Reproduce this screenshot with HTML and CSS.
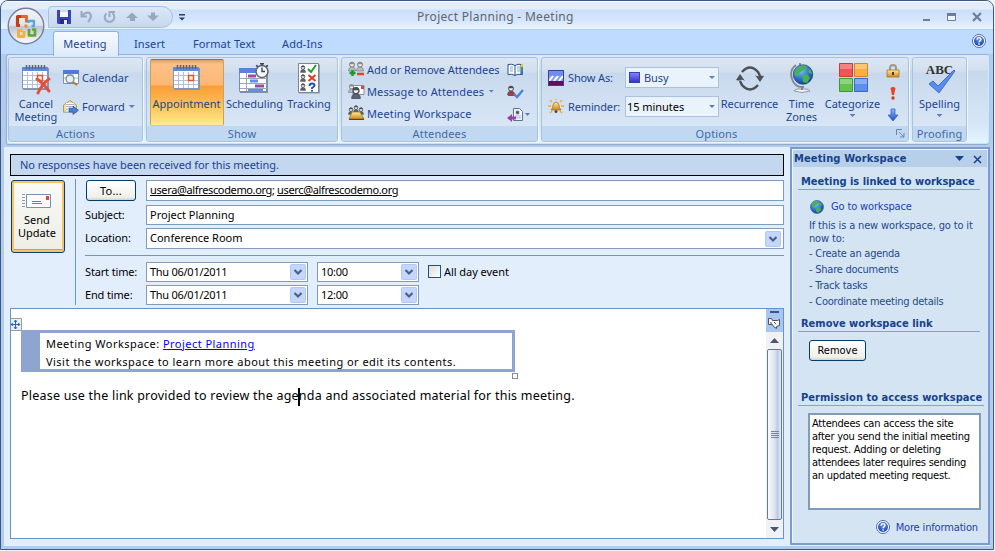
FILE: index.html
```
<!DOCTYPE html>
<html lang="en">
<head>
<meta charset="utf-8">
<title>Project Planning - Meeting</title>
<link rel="stylesheet" href="styles.css">
</head>
<body>
<svg class="defs" width="0" height="0">
  <defs>
    <linearGradient id="gBlue" x1="0" y1="0" x2="0" y2="1"><stop offset="0" stop-color="#8fb6ff"/><stop offset="1" stop-color="#1f4fc4"/></linearGradient>
    <linearGradient id="gGold" x1="0" y1="0" x2="0" y2="1"><stop offset="0" stop-color="#ffe9a0"/><stop offset="1" stop-color="#d08a14"/></linearGradient>
    <radialGradient id="gGlobe" cx=".4" cy=".3" r=".8"><stop offset="0" stop-color="#7cc4f4"/><stop offset=".6" stop-color="#2367c4"/><stop offset="1" stop-color="#123a80"/></radialGradient>
    <radialGradient id="gHelp" cx=".5" cy=".3" r=".7"><stop offset="0" stop-color="#6f9cf0"/><stop offset="1" stop-color="#123fae"/></radialGradient>
    <linearGradient id="gOrb" x1="0" y1="0" x2="0" y2="1"><stop offset="0" stop-color="#f4f6fa"/><stop offset=".48" stop-color="#dfe3ec"/><stop offset=".52" stop-color="#bcc4d3"/><stop offset="1" stop-color="#fdfdff"/></linearGradient>
    <symbol id="cal" viewBox="0 0 32 32">
      <path d="M3 5h26v22H3z" fill="#8b93a8"/><path d="M2.500 4.500h25v21h-25z" fill="#fff" stroke="#8496b8"/>
      <path d="M2 4h26v4H2z" fill="#5d8be0"/>
      <path d="M3 12.500h24M3 17.500h24M3 21.500h24M7.500 9v16M12.500 9v16M17.500 9v16M22.500 9v16" stroke="#b3c0da"/>
      <path d="M6.500 2v4M9.500 2v4M12.500 2v4M15.500 2v4M18.500 2v4M21.500 2v4M24.500 2v4" stroke="#5c6270" stroke-width="1.500"/>
      <path d="M17.500 12.500h5v5h-5z" fill="#fff3e8" stroke="#e8502c" stroke-width="1.400"/>
    </symbol>
    <symbol id="person" viewBox="0 0 8 9"><circle cx="4" cy="2.700" r="2.400" fill="#eee" stroke="#46494f"/><path d="M1.500 2.200a2.500 2.500 0 0 1 5 0z" fill="#4b4e55"/><path d="M.5 9q0-4 3.500-4t3.500 4z" fill="#5d636e" stroke="#3d4250" stroke-width=".5"/></symbol>
    <symbol id="pale" viewBox="0 0 8 9"><circle cx="4" cy="2.700" r="2.400" fill="#f1efe9" stroke="#777"/><path d="M1.500 2.200a2.500 2.500 0 0 1 5 0z" fill="#8d8a84"/><path d="M.5 9q0-4 3.500-4t3.500 4z" fill="#b9bec4" stroke="#6c727c" stroke-width=".6"/></symbol>
    <symbol id="help" viewBox="0 0 14 14"><circle cx="7" cy="7" r="6.500" fill="#fff" stroke="#4c6cae"/><circle cx="7" cy="7" r="5" fill="url(#gHelp)"/><path d="M5 5.600q.1-2 2-2t2 1.700q0 1-1 1.600t-1 1.300M7 9.200v1.500" fill="none" stroke="#fff" stroke-width="1.400"/></symbol>
    <symbol id="chev" viewBox="0 0 16 16"><rect x=".5" y=".5" width="15" height="15" rx="1" fill="#c5d6fc" stroke="#b3c7f4"/><path d="M4.500 6l3.500 3.500L11.500 6" fill="none" stroke="#4a6088" stroke-width="2.200"/></symbol>
  </defs>
</svg>

<div class="window">
  <header class="titlebar">
    <div class="qat">
      <svg width="14" height="14" viewBox="0 0 14 14"><path d="M0 0h14v14H1L0 13z" fill="#3a43b8"/><path d="M3 0h8v7H3z" fill="#f3f7ff"/><path d="M3 0h8v2H3z" fill="#c9dbf8"/><path d="M3 9h8v5H3z" fill="#25307a"/><path d="M7 10h3v4H7z" fill="#e6ebfa"/></svg>
      <svg width="14" height="14" viewBox="0 0 14 14"><path d="M1.500 1v5.500H7" fill="none" stroke="#9ba9c2" stroke-width="2"/><path d="M2 6q4-4.500 7.500-3 3.500 3.500-1.500 9" fill="none" stroke="#9ba9c2" stroke-width="2.200"/></svg>
      <svg width="14" height="14" viewBox="0 0 14 14"><path d="M3.500 3.500q-3 3-1 6.500 4 4 8 0 2-4-1-7M6.500 7V2H12" fill="none" stroke="#9ba9c2" stroke-width="2"/></svg>
      <svg width="12" height="14" viewBox="0 0 12 14"><path d="M0 8l6-5.500L12 8H9v3H4V8z" fill="#97a6c0"/></svg>
      <svg width="12" height="14" viewBox="0 0 12 14"><path d="M0 5.500h4v-3h4v3h4L6 11z" fill="#97a6c0"/></svg>
    </div>
    <svg class="qat-more" width="6" height="8" viewBox="0 0 6 8"><path d="M0 0h6v1.500H0zM0 3.500h6l-3 3z" fill="#213f7a"/></svg>
    <h1>Project Planning - Meeting</h1>
    <svg class="winbtns" width="62" height="14" viewBox="0 0 62 14"><path d="M1 9h7v2H1z" fill="#6d7d99"/><path d="M25.500 4.500h8v6h-8z" fill="#eef4ff" stroke="#6d7d99"/><path d="M25 3h9v3h-9z" fill="#6d7d99"/><path d="M51 3l8 8M59 3l-8 8" stroke="#6d7d99" stroke-width="2.200"/></svg>
  </header>
  <svg class="orb" width="38" height="38" viewBox="0 0 38 38">
    <circle cx="19" cy="19" r="17.800" fill="url(#gOrb)" stroke="#75809a" stroke-width="1.400"/>
    <g fill="none" stroke-linejoin="round">
      <path d="M19 10v-.5h-8.500V18.500H13" stroke="#c93a12" stroke-width="3.200"/><path d="M14 9.500h5.500v6" stroke="#e4622b" stroke-width="2.800"/>
      <path d="M21.500 16v-2h5.500v5h-2.500" stroke="#5aa3dc" stroke-width="2.300"/>
      <path d="M17 24v5.500h-5.500v-6h4" stroke="#f3b429" stroke-width="2.900"/>
      <path d="M22 22v6.500h6v-6h-3" stroke="#5fa730" stroke-width="2.700"/>
    </g><path d="M17.500 17.500h3v3h-3z" fill="#ee8a2c"/>
  </svg>

  <nav class="tabs">
    <span class="tab active">Meeting</span><span class="tab t2">Insert</span><span class="tab t3">Format Text</span><span class="tab t4">Add-Ins</span>
    <svg class="tabhelp" width="14" height="14"><use href="#help"/></svg>
  </nav>

  <section class="ribbon">
    <div class="group actions">
      <div class="gbody">
        <div class="big w48"><svg width="32" height="32" viewBox="0 0 32 32"><use href="#cal"/><path d="M17 16q6 4 12 12M29 16q-7 5-11 14" fill="none" stroke="#e4513a" stroke-width="3" stroke-linecap="round"/></svg><span>Cancel<br>Meeting</span></div>
        <div class="list two">
          <div class="cmd"><svg width="16" height="16" viewBox="0 0 16 16"><path d="M.5.500h15v13H.5z" fill="#fff" stroke="#7990ba"/><path d="M0 0h16v4H0z" fill="#4d7bd8"/><path d="M1 8h14M5 4v9M10 4v9" stroke="#a7b6d2"/><circle cx="7" cy="9" r="4" fill="#e6edf5" stroke="#7b8798" stroke-width="1.300"/><path d="M10 12l4 3" stroke="#bd7721" stroke-width="2"/></svg><span>Calendar</span></div>
          <div class="cmd"><svg width="16" height="16" viewBox="0 0 16 16"><path d="M.5 6L7 1.500 13.500 6v7H.5z" fill="#f8dc94" stroke="#b39a62"/><path d="M3 4h8v5H3z" fill="#fff"/><path d="M3 5.500h8M3 7.500h8" stroke="#9db4dd"/><path d="M.5 13L7 8l6.500 5z" fill="#eef2f8" stroke="#9aa8be" stroke-width=".7"/><path d="M6 9.500h4V7l5.500 4.300-5.500 4.200V13H6z" fill="#4a7fe2" stroke="#1b4096" stroke-width=".6"/></svg><span>Forward</span><i class="dd"></i></div>
        </div>
      </div>
      <div class="gname">Actions</div>
    </div>

    <div class="group show">
      <div class="gbody">
        <div class="big sel"><svg width="32" height="32"><use href="#cal"/></svg><span>Appointment</span></div>
        <div class="big w62"><svg width="32" height="32" viewBox="0 0 32 32"><path d="M1 7h28v23H1z" fill="#8390a8"/><path d="M.5 5.500h27v23H.5z" fill="#fff" stroke="#7d8da9"/><path d="M0 5h28v5H0z" fill="#5583de"/><path d="M1 15.500h27M1 20.500h27M1 25.500h27M7.500 10v18" stroke="#98a5bd"/><path d="M9 11.500h8v3H9zM16 21.500h9v3h-9z" fill="#984b9f"/><path d="M11 16.500h8v3h-8zM9 26h15v2H9z" fill="#5a90ef"/><circle cx="23" cy="8.500" r="6" fill="#f6f8fb" stroke="#626a78" stroke-width="1.600"/><path d="M21 .7h4M23 .7v2M23 4.500v4h3M17 2.500l2 1M29 2.500l-2 1" fill="none" stroke="#3d4350" stroke-width="1.400"/></svg><span>Scheduling</span></div>
        <div class="big w48t"><svg width="26" height="32" viewBox="0 0 26 32"><path d="M3 1.500h21v29H3z" fill="#9aa2b0"/><path d="M2.500.500h20v29h-20z" fill="#fff" stroke="#77849c"/><use href="#person" x="4" y="2" width="6" height="8"/><use href="#person" x="4" y="11" width="6" height="8"/><use href="#person" x="4" y="20" width="6" height="8"/><path d="M12 6l3 3 5-7" fill="none" stroke="#219b30" stroke-width="2"/><path d="M12.500 12l7 6M19.500 12l-7 6" stroke="#e23a20" stroke-width="2"/><path d="M13.500 23q0-2.500 2.500-2.500t2.500 2q0 1-2.500 2.500v1M16 27v1.500" fill="none" stroke="#1c51ad" stroke-width="2"/></svg><span>Tracking</span></div>
      </div>
      <div class="gname">Show</div>
    </div>

    <div class="group attendees">
      <div class="gbody">
        <div class="list three">
          <div class="cmd addrem"><svg width="17" height="16" viewBox="0 0 17 16"><use href="#pale" x="0" y="0" width="8" height="11"/><use href="#pale" x="8" y="0" width="8" height="11"/><path d="M4.500 9v6M1.500 12h6" stroke="#1b9b29" stroke-width="2.500"/><path d="M9 13h7" stroke="#e34427" stroke-width="2.500"/></svg><span>Add or Remove Attendees</span></div>
          <div class="cmd"><svg width="17" height="16" viewBox="0 0 17 16"><path d="M5 2.500h11v9H5z" fill="#fff" stroke="#8190ab"/><path d="M13 3h3v3h-3z" fill="#d94a2d"/><use href="#pale" x="0" y="1" width="7" height="9"/><use href="#person" x="3" y="4" width="10" height="12"/></svg><span>Message to Attendees</span><i class="dd"></i></div>
          <div class="cmd"><svg width="17" height="16" viewBox="0 0 17 16"><use href="#person" x="0" y="2" width="6" height="8"/><use href="#person" x="5" y="0" width="6" height="8"/><use href="#person" x="10" y="2" width="6" height="8"/><path d="M4 7h8l4 7H1z" fill="url(#gGold)" stroke="#9b6c13" stroke-width=".7"/><path d="M1 14.500h15" stroke="#554323"/></svg><span>Meeting Workspace</span></div>
        </div>
        <div class="minis">
          <svg width="24" height="14" viewBox="0 0 24 14"><path d="M1 1.500q4-1 7 1 3-2 6-1v10q-3-1-6 1-3-2-7-1z" fill="#fff" stroke="#284f91"/><path d="M8 2.500v10" stroke="#284f91"/><path d="M3 4h3M3 6h3M3 8h3M10 4h3M10 6h3M10 8h3" stroke="#81a5da"/><path d="M15 1v3" stroke="#e9c337" stroke-width="2"/><path d="M15 4v4" stroke="#37a047" stroke-width="2"/><path d="M15 8v4" stroke="#3b69c2" stroke-width="2"/></svg>
          <svg width="24" height="14" viewBox="0 0 24 14"><use href="#person" x="0" y="0" width="8" height="11"/><path d="M2 7h5l2 4H1z" fill="#a23b45"/><path d="M7 9l3 3 6-7" fill="none" stroke="#4b82db" stroke-width="2.400"/></svg>
          <svg width="24" height="16" viewBox="0 0 24 16"><path d="M6.500 1.500h6l3 3v9h-9z" fill="#f5f9ff" stroke="#61718e"/><path d="M9 4h3v3H9zM8 9h6M8 11h6" fill="#445" stroke="#8b98ae" stroke-width=".7"/><path d="M0 11l5-4v2.500h4v3H5V15z" fill="#9a45a3"/><path d="M18 6h5l-2.500 3z" fill="#5580b8"/></svg>
        </div>
      </div>
      <div class="gname">Attendees</div>
    </div>

    <div class="group options">
      <div class="gbody">
        <div class="optgrid">
          <svg width="16" height="16" viewBox="0 0 16 16"><path d="M0 0h16v6H0z" fill="#6f8ff0"/><path d="M0 6h16v5H0z" fill="#8aa4e6"/><path d="M1 11l4-5M6 11l4-5M11 11l4-5" stroke="#fff" stroke-width="2"/><path d="M0 11h16v5H0z" fill="#6b0a63"/><path d="M.5.500h15v15H.5z" fill="none" stroke="#3e3c94"/></svg>
          <span>Show As:</span><div class="combo busy"><b></b><em>Busy</em><i class="dd"></i></div>
          <svg width="16" height="16" viewBox="0 0 16 16"><path d="M2 1l2 2M14 1l-2 2M0 7h3M13 7h3M2 14l2-2M14 14l-2-2M8 0v1" stroke="#f1a638" stroke-width="1.300"/><path d="M3 11q2-2 2-5 1-3 3-3t3 3q0 3 2 5z" fill="url(#gGold)" stroke="#a46a14" stroke-width=".7"/><circle cx="8" cy="12.500" r="1.500" fill="#6a481c"/></svg>
          <span>Reminder:</span><div class="combo"><em class="dark">15 minutes</em><i class="dd"></i></div>
        </div>
        <div class="big rec"><svg width="32" height="32" viewBox="0 0 32 32"><path d="M8 9Q16 0 24 9l2 4M24 22Q16 31 8 22l-2-4" fill="none" stroke="#4d5057" stroke-width="2.500"/><path d="M2 17l4-6 5 7q-3-2-4-1t-5 0zM30 13l-4 6-5-7q3 2 4 1t5 0z" fill="#4d5057"/></svg><span>Recurrence</span></div>
        <div class="big tz"><svg width="28" height="32" viewBox="0 0 28 32"><path d="M9 26q-3 1-3 2 8 3 16 0-1-2-5-2z" fill="#f1f3f5" stroke="#8d939d"/><path d="M12 0v3M8 2Q1 7 4 16t12 8M14 23v4" fill="none" stroke="#81878f" stroke-width="1.800"/><circle cx="15" cy="11.500" r="9.800" fill="url(#gGlobe)" stroke="#1f4a79" stroke-width=".7"/><path d="M9 5l6-3 4 2-3 3-5 3-2 4-3-3zM14 12l5-1 3 4-3 5-4-1zM20 6l3 1 1 4-3-1z" fill="#48b153"/></svg><span>Time<br>Zones</span></div>
        <div class="big cat"><svg width="32" height="32" viewBox="0 0 32 32"><path d="M2.500.500h13v13h-13z" fill="#f05454" stroke="#cf3835"/><path d="M17.500.500h13v13h-13z" fill="#f8b041" stroke="#d58724"/><path d="M2.500 15.500h13v13h-13z" fill="#62c34f" stroke="#3c9a31"/><path d="M17.500 15.500h13v13h-13z" fill="#5b8eef" stroke="#3b65c8"/><path d="M3 1h12v5H3zM18 1h12v5H18zM3 16h12v5H3zM18 16h12v5H18z" fill="#fff" opacity=".28"/></svg><span>Categorize</span><i class="dd"></i></div>
        <div class="flags">
          <svg width="14" height="14" viewBox="0 0 14 14"><path d="M4 7V4q0-3 3-3t3 3v3" fill="none" stroke="#9a988c" stroke-width="2"/><path d="M1 6h12v7H1z" fill="url(#gGold)" stroke="#a77719" stroke-width=".8"/><path d="M7 8v3" stroke="#4c3a17" stroke-width="2"/></svg>
          <svg width="14" height="14" viewBox="0 0 14 14"><path d="M4.500 2q2.500-2 5 0L8 9H6z" fill="#e8441d"/><circle cx="7" cy="12" r="1.700" fill="#d63818"/></svg>
          <svg width="14" height="14" viewBox="0 0 14 14"><path d="M5 1h4v6h3l-5 6-5-6h3z" fill="url(#gBlue)" stroke="#2656c0" stroke-width=".7"/></svg>
        </div>
      </div>
      <div class="gname optname">Options<svg class="launch" width="9" height="9" viewBox="0 0 9 9"><path d="M.5 6V.500H6M3 3l5 5M8 4v4H4" fill="none" stroke="#6785ad"/></svg></div>
    </div>

    <div class="group proofing">
      <div class="gbody">
        <div class="big spell"><div class="abc">ABC<svg width="28" height="24" viewBox="0 0 28 24"><path d="M1 14l4-3 5 5L26 0l1 1-16 22z" fill="#5b8dee" stroke="#2c5cc0" stroke-width=".8"/></svg></div><span>Spelling</span><i class="dd"></i></div>
      </div>
      <div class="gname">Proofing</div>
    </div>
  </section>

  <main class="content">
    <div class="form">
      <div class="infobar">No responses have been received for this meeting.</div>
      <div class="head">
        <button class="send"><svg width="30" height="16" viewBox="0 0 30 16"><path d="M0 1.500h3M0 4.500h3M0 7.500h3M0 10.500h3M0 13.500h3" stroke="#8b98ad"/><path d="M4.500 1.500h24v13h-24z" fill="#fbfcfd" stroke="#7690b7"/><path d="M24 3h3v4h-3z" fill="#d94b2c"/><path d="M10 8.500h9M10 10.500h10" stroke="#6381b6"/></svg><span>Send<br>Update</span></button>
        <div class="fields">
          <div class="row r1"><button class="xpbtn tobtn">To...</button><div class="input to"><u>usera@alfrescodemo.org</u>; <u>userc@alfrescodemo.org</u></div></div>
          <div class="row r2"><label>Subject:</label><div class="input">Project Planning</div></div>
          <div class="row r3"><label>Location:</label><div class="input">Conference Room<svg width="16" height="16"><use href="#chev"/></svg></div></div>
          <div class="row r4"><label>Start time:</label><div class="input date">Thu 06/01/2011<svg width="16" height="16"><use href="#chev"/></svg></div><div class="input time">10:00<svg width="16" height="16"><use href="#chev"/></svg></div><i class="check"></i><span class="allday">All day event</span></div>
          <div class="row r5"><label>End time:</label><div class="input date">Thu 06/01/2011<svg width="16" height="16"><use href="#chev"/></svg></div><div class="input time">12:00<svg width="16" height="16"><use href="#chev"/></svg></div></div>
        </div>
      </div>
      <div class="editor">
        <div class="page">
          <svg class="mover" width="11" height="13" viewBox="0 0 11 13"><path d="M0 .500h10.500v12H0" fill="#e8eefa" stroke="#9c9c9c"/><path d="M4.500 2v9M0 6.500h9" stroke="#2f62c4"/><path d="M3 3.500L4.500 2 6 3.500zM3 9.500L4.500 11 6 9.500zM1.500 5L0 6.500 1.500 8zM7.500 5L9 6.500 7.500 8z" fill="#2f62c4" stroke="#2f62c4" stroke-width=".6"/></svg>
          <div class="card"><p class="l1">Meeting Workspace: <u>Project Planning</u></p><p class="l2">Visit the workspace to learn more about this meeting or edit its contents.</p><i class="handle"></i></div>
          <p class="bodytext">Please use the link provided to review the age<i class="caret"></i>nda and associated material for this meeting.</p>
        </div>
        <div class="scroll">
          <svg width="17" height="23" viewBox="0 0 17 23"><path d="M0 0h17v23H0z" fill="#a9c6f0"/><path d="M4 2h9v2H4z" fill="#3f5680"/><path d="M2.500 9.500h3l1 2h5l2-1v6l-3 1v2l-3-2-1-2h-4z" fill="#f4f4f0" stroke="#4b5466"/><path d="M8 13l2 2M4 14h2" stroke="#4b5466"/></svg>
          <svg class="arr" width="17" height="18" viewBox="0 0 17 18"><path d="M4 11l4.500-5 4.500 5z" fill="#4a5573"/></svg>
          <div class="thumb"><i></i><i></i><i></i><i></i></div>
          <svg class="arr" width="17" height="18" viewBox="0 0 17 18"><path d="M4 7l4.500 5L13 7z" fill="#4a5573"/></svg>
        </div>
      </div>
    </div>

    <aside class="pane">
      <div class="panehead"><strong>Meeting Workspace</strong><svg width="28" height="10" viewBox="0 0 28 10"><path d="M0 2h9L4.500 7z" fill="#15428b"/><path d="M19 2l7 7M26 2l-7 7" stroke="#15428b" stroke-width="1.500"/></svg></div>
      <h2 class="h-link">Meeting is linked to workspace</h2>
      <div class="goto"><svg width="14" height="14" viewBox="0 0 14 14"><circle cx="7" cy="7" r="6.500" fill="url(#gGlobe)" stroke="#476c96" stroke-width=".8"/><path d="M2 3l4-2 2 2-3 3-3 1zM6 8l4-1 1 3-3 3-2-2zM9 2l3 2-1 2-2-1z" fill="#48b053"/></svg><a>Go to workspace</a></div>
      <p class="intro">If this is a new workspace, go to it<br>now to:</p>
      <ul><li>- Create an agenda</li><li>- Share documents</li><li>- Track tasks</li><li>- Coordinate meeting details</li></ul>
      <h2 class="h-rem">Remove workspace link</h2>
      <button class="xpbtn remove">Remove</button>
      <h2 class="h-perm">Permission to access workspace</h2>
      <div class="note">Attendees can access the site<br>after you send the initial meeting<br>request. Adding or deleting<br>attendees later requires sending<br>an updated meeting request.</div>
      <div class="more"><svg width="14" height="14"><use href="#help"/></svg><a>More information</a></div>
    </aside>
  </main>
</div>
</body>
</html>
```
FILE: styles.css
```
* { box-sizing: border-box; }
html, body { height: 551px; overflow: hidden; }
body { margin: 0; background: #f2f5fa; font-family: "Noto Sans", "Open Sans", sans-serif; font-size: 11px; color: #1c4590; }
p, h1, h2, ul { margin: 0; padding: 0; list-style: none; font-weight: normal; }
i, em { font-style: normal; }
svg { display: block; flex: none; }
span, a, label, p, strong { white-space: nowrap; }
.defs { position: absolute; }
.window { position: relative; width: 994px; height: 550px; border: 1px solid #3b5a82; border-radius: 8px 8px 0 0; background: #b4cbed; overflow: hidden; }

.titlebar { display: flex; height: 29px; border-top: 1px solid #fff; border-bottom: 1px solid #b0cfef; background: linear-gradient(#e4edfb 0 7px, #ccdff9 8px, #d5e6fb 18px, #eaf3ff 27px, #e8f3ff); }
.qat { display: flex; gap: 9px; align-items: center; width: 125px; height: 22px; margin: 4px 0 0 47px; padding-left: 8px; border: 1px solid #a8bfde; border-radius: 4px 11px 11px 0; background: linear-gradient(#dce7f7, #c7d8ef); }
.qat-more { margin: 12px 0 0 6px; }
h1 { margin: 6px 0 0 232px; font-size: 12px; line-height: 17px; letter-spacing: .3px; color: #62656f; white-space: nowrap; }
.winbtns { margin: 8px 9px 0 auto; }
.orb { position: absolute; left: 6px; top: 6px; }

.tabs { display: flex; height: 24px; background: #bfdbff; letter-spacing: .1px; line-height: 27px; }
.tab.active { width: 66px; height: 25px; margin: 1px 0 0 52px; padding-right: 2px; line-height: 24px; text-align: center; border: 1px solid #8db2e3; border-bottom: 0; border-radius: 3px 3px 0 0; background: linear-gradient(#f5faff, #dfeafa); z-index: 1; }
.t2 { margin-left: 15px; width: 59px; }
.t3 { width: 89px; }
.tabhelp { margin: 4px 7px 0 auto; }

.ribbon { display: flex; gap: 3px; width: 983px; height: 90px; margin-left: 5px; padding: 2px 1px; border: 1px solid #8db2e3; border-right-color: #b7f0ff; border-bottom-color: #b4ecf8; border-radius: 3px; background: linear-gradient(#dfe8f5 0, #d2dfef 15px, #c8d9ed 16px, #d7e7f7 70px, #e4f4ff); box-shadow: 0 1px 1px #8ba9d0; }
.group { height: 85px; border: 1px solid #a6c3e1; border-radius: 3px; background: linear-gradient(#dde7f3 0, #d2deed 14px, #c9d9ed 15px, #d8e6f6 69px); box-shadow: 1px 1px #eff7ff; overflow: hidden; }
.actions { width: 135px; }
.show { width: 192px; }
.attendees { width: 197px; }
.options { width: 368px; }
.proofing { width: 55px; }
.gbody { display: flex; height: 68px; }
.gname { height: 15px; line-height: 15px; text-align: center; background: #c2d8f0; color: #3e6aaa; letter-spacing: .15px; }
.optname { position: relative; padding-right: 17px; }
.launch { position: absolute; right: 3px; top: 3px; }
.dd { flex: none; width: 6px; height: 3px; background: #5580b8; clip-path: polygon(0 0, 100% 0, 50% 100%); }
.big { display: flex; flex-direction: column; align-items: center; padding-top: 5px; line-height: 13px; text-align: center; letter-spacing: 0; }
.big > svg { margin-bottom: 2px; }
.big .dd { margin-top: 4px; }
.w48 { width: 54px; }
.sel { width: 74px; height: 67px; margin: 1px 0 0 3px; padding: 3px 1px 0 0; border: 1px solid #8b7552; border-color: #8b7552 #c9a25b #ffc93c; border-radius: 2px; background: linear-gradient(#d9a06a 0, #fbc088 4px, #fdb873 25px, #fb9e38 26px, #fdb952 42px, #ffe583 62px, #fff0a0); }
.w62 { width: 61px; }
.w48t { width: 48px; }
.list { display: flex; flex-direction: column; }
.cmd { display: flex; align-items: center; letter-spacing: .13px; }
.addrem { letter-spacing: -.08px; }
.cmd span { margin-left: 2px; }
.two .cmd span { margin-left: 3px; letter-spacing: 0; }
.cmd .dd { margin-left: 4px; }
.two .cmd { height: 29px; }
.two { padding-top: 5px; }
.three { width: 159px; padding: 0 0 0 6px; }
.three .cmd { height: 22px; }
.minis { display: flex; flex-direction: column; gap: 8px; padding: 5px 0 0 6px; }
.optgrid { display: grid; grid-template-columns: 16px 53px 94px; grid-template-rows: 21px 21px; row-gap: 8px; column-gap: 4px; align-items: center; padding: 9px 0 0 6px; width: 177px; height: 60px; letter-spacing: -.15px; }
.combo { display: flex; align-items: center; height: 21px; padding: 0 3px 0 1px; border: 1px solid #abc1de; background: #eaf2fb; letter-spacing: -.05px; }
.combo b { width: 11px; height: 11px; margin: 0 4px 0 2px; background: linear-gradient(#8080ff, #3434cf); border: 1px solid #3d3da8; }
.combo .dd { margin-left: auto; }
.dark { color: #000; }
.rec { width: 61px; letter-spacing: -.12px; }
.tz { width: 43px; }
.cat { width: 59px; }
.flags { display: flex; flex-direction: column; gap: 8px; padding: 6px 0 0 4px; }
.spell { width: 100%; }
.abc { position: relative; height: 34px; font: bold 13px/13px "Liberation Serif", serif; color: #333; letter-spacing: 0; }
.abc svg { position: absolute; left: 2px; top: 7px; }

.content { display: flex; height: 399px; margin: 3px 3px 0 3px; background: #e3eefd; }
.form { display: flex; flex: none; flex-direction: column; width: 786px; padding: 7px 0 0 6px; color: #000; letter-spacing: 0; }
.infobar { width: 774px; height: 22px; padding-left: 9px; border: 1px solid #000; line-height: 19px; background: #c3d8ef; color: #1f4190; letter-spacing: -.06px; }
.head { display: flex; height: 126px; margin-top: 3px; width: 774px; }
.send { display: flex; flex: none; flex-direction: column; align-items: center; width: 54px; height: 73px; margin: 1px 0 0 1px; padding: 12px 2px 0 0; border: 1px solid #0f3c6b; border-radius: 3px; background: linear-gradient(#fafaf7, #eeeee6); box-shadow: inset 0 0 0 2px #f6c463, inset 0 -3px #e79c22; font: 11px/13px "Noto Sans", sans-serif; letter-spacing: 0; }
.send svg { margin: 0 0 4px; }
.fields { flex: none; width: 709px; margin-left: 10px; padding: 1px 0 0 9px; border-left: 1px solid #6a97d4; }
.row { display: flex; height: 20px; line-height: 20px; }
.r1 { height: 21px; }
.r2 { margin-top: 4px; }
.r3 { height: 21px; margin-top: 3px; }
.r4 { margin-top: 6px; padding-top: 6px; height: 27px; border-top: 1px solid #6a97d4; }
.r5 { margin-top: 3px; }
.row label { width: 61px; letter-spacing: -.15px; }
.input { display: flex; flex: 1; align-items: center; height: 100%; padding: 0 2px 1px 3px; border: 1px solid #7f9db9; background: #fff; white-space: pre; }
.input svg { margin: 1px 0 0 auto; }
.input.to { letter-spacing: -.36px; }
.date { flex: none; width: 162px; padding-right: 1px; letter-spacing: -.27px; }
.time { flex: none; width: 102px; margin-left: 9px; padding-right: 1px; letter-spacing: -.27px; }
.check { width: 13px; height: 13px; margin: 3px 3px 0 9px; border: 1px solid #1c5180; background: linear-gradient(135deg, #dcdcd7, #fff); }
.allday { letter-spacing: -.05px; }
.xpbtn { padding: 0; border: 1px solid #003c74; border-radius: 3px; background: linear-gradient(#fff, #f0f0ea 85%, #d8d0c4); font: 11px/18px "Noto Sans", sans-serif; letter-spacing: .2px; }
.tobtn { width: 50px; margin: 0 10px 0 1px; }

.editor { display: flex; width: 774px; height: 231px; margin-top: 3px; border: 1px solid #6593cf; background: #fff; }
.page { flex: 1; }
.mover { margin-top: 9px; }
.card { position: relative; width: 494px; height: 42px; margin: -1px 0 0 10px; padding-left: 6px; border: 3px solid #8ea5d2; border-left-width: 19px; line-height: 18px; letter-spacing: .46px; }
.card p { height: 18px; padding-top: 2px; }
.card u { color: #00f; }
.handle { position: absolute; right: -6px; bottom: -10px; width: 6px; height: 6px; border: 1px solid #8b8b8b; background: #fff; }
.bodytext { margin: 15px 0 0 10px; font-size: 12.5px; line-height: 17px; letter-spacing: .22px; }
.caret { display: inline-block; width: 2px; height: 18px; margin: -4px -1px -4px -1px; vertical-align: middle; background: #000; }
.scroll { display: flex; flex-direction: column; width: 17px; background: #f0f1f4; }
.thumb { display: flex; flex: 1; flex-direction: column; gap: 1px; align-items: center; justify-content: center; width: 15px; margin: -1px 0 0 1px; border: 1px solid #6b7894; border-radius: 2px; background: linear-gradient(90deg, #fafafc, #dce4f0 50%, #b9cbe7 75%, #e8eef8); }
.thumb i { width: 8px; height: 1px; background: #7c879c; }

.pane { flex: none; width: 200px; height: 398px; border: 2px solid #7a9cce; background: #d5e4f3; padding: 1px; font-family: "DejaVu Sans Condensed", "Noto Sans", sans-serif; letter-spacing: -.15px; color: #1d4a90; box-shadow: inset 1px 1px #eef5fc; }
.panehead { display: flex; align-items: center; justify-content: space-between; height: 17px; padding: 0 4px 0 1px; background: #b8cfea; color: #15428b; }
.panehead strong { font: bold 11px/18px "DejaVu Sans Condensed", sans-serif; letter-spacing: .15px; }
.pane h2 { width: 182px; height: 16px; margin-left: 5px; padding-left: 3px; border-bottom: 1px solid #7ba4dc; font-size: 11px; font-weight: bold; letter-spacing: 0; line-height: 16px; white-space: nowrap; color: #15428b; }
.pane .h-link { margin-top: 7px; }
.pane a { color: #1c3fae; }
.goto { display: flex; gap: 7px; align-items: center; margin: 9px 0 0 17px; height: 15px; }
.intro { margin: 5px 0 0 16px; line-height: 13px; }
.pane ul { margin: 1px 0 0 16px; line-height: 16px; letter-spacing: -.24px; }
.pane .h-rem { margin-top: 6px; }
.remove { display: block; width: 57px; height: 21px; margin: 8px 0 0 16px; font-family: "DejaVu Sans Condensed", sans-serif; letter-spacing: 0; }
.pane .h-perm { margin-top: 29px; width: 186px; letter-spacing: .04px; }
.note { width: 173px; height: 97px; margin: 7px 0 0 15px; padding: 2px; border: 2px solid #7f9db9; background: #fff; color: #000; line-height: 13px; letter-spacing: -.23px; white-space: nowrap; }
.more { display: flex; gap: 6px; justify-content: flex-end; align-items: center; margin: 10px 9px 0 0; }
```
